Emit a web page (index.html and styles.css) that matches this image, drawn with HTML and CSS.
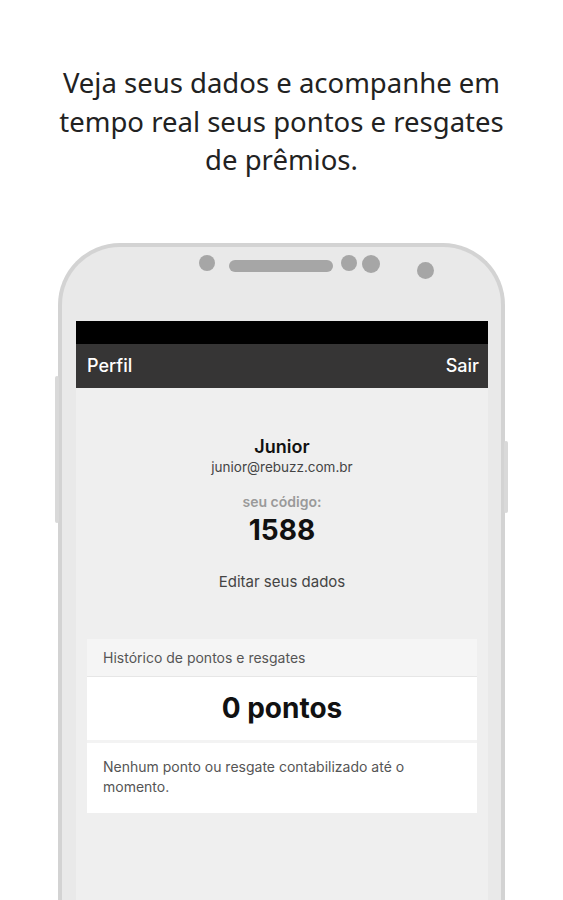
FILE: index.html
```html
<!DOCTYPE html>
<html lang="pt-BR">
<head>
    <meta charset="UTF-8">
    <meta name="viewport" content="width=device-width, initial-scale=1.0">
    <title>Perfil</title>
    <link rel="stylesheet" href="styles.css">
</head>
<body>
    <h1 class="headline">Veja seus dados e acompanhe em<br>tempo real seus pontos e resgates<br>de prêmios.</h1>

    <div class="phone">
        <span class="side-btn left"></span>
        <span class="side-btn right"></span>

        <div class="phone-top">
            <span class="dot"></span>
            <span class="speaker"></span>
            <span class="dot dot-2"></span>
            <span class="dot dot-3"></span>
            <span class="dot dot-4"></span>
        </div>

        <div class="screen">
            <div class="status-bar"></div>
            <div class="app-header">
                <span>Perfil</span>
                <span>Sair</span>
            </div>

            <div class="profile">
                <div class="name">Junior</div>
                <div class="email">junior@rebuzz.com.br</div>
                <div class="code-label">seu código:</div>
                <div class="code">1588</div>
                <div class="edit">Editar seus dados</div>
            </div>

            <div class="card">
                <div class="card-header">Histórico de pontos e resgates</div>
                <div class="card-points">0 pontos</div>
                <div class="card-msg">Nenhum ponto ou resgate contabilizado até o momento.</div>
            </div>
        </div>
    </div>
</body>
</html>
```

FILE: styles.css
```css
html, body {
    height: 900px;
    overflow: hidden;
}

body {
    margin: 0;
    background: #ffffff;
    font-family: Inter, "Liberation Sans", Arial, sans-serif;
    color: #222;
}

.headline {
    margin: 0;
    padding-top: 64px;
    font-family: "Noto Sans", "Open Sans", sans-serif;
    font-weight: 400;
    font-size: 27.5px;
    line-height: 38.5px;
    text-align: center;
    color: #222;
}

.phone {
    position: relative;
    margin: 63px 0 0 58px;
    width: 439px;
    height: 700px;
    border: 4px solid #d3d3d3;
    border-bottom: none;
    border-radius: 62px 62px 0 0;
    background: #e9e9e9;
}

.side-btn {
    position: absolute;
    width: 4px;
    background: #d9d9d9;
    border-radius: 2px;
}

.side-btn.left {
    left: -7px;
    top: 129px;
    height: 147px;
}

.side-btn.right {
    right: -7px;
    top: 194px;
    height: 72px;
}

.phone-top {
    height: 74px;
    display: flex;
    align-items: flex-start;
    padding-left: 137px;
    box-sizing: border-box;
    padding-top: 8px;
}

.dot {
    width: 16px;
    height: 16px;
    border-radius: 50%;
    background: #a6a6a6;
}

.speaker {
    width: 104px;
    height: 12px;
    margin: 5px 0 0 14px;
    border-radius: 6px;
    background: #a6a6a6;
}

.dot-2 {
    margin-left: 8px;
}

.dot-3 {
    width: 18px;
    height: 18px;
    margin: 0 0 0 5px;
}

.dot-4 {
    width: 17px;
    height: 17px;
    margin: 7px 0 0 37px;
}

.screen {
    margin: 0 13px 0 14px;
    height: 700px;
    background: #efefef;
}

.status-bar {
    height: 23px;
    background: #000;
}

.app-header {
    height: 44px;
    background: #363535;
    display: flex;
    justify-content: space-between;
    align-items: center;
    padding: 0 9px 0 11px;
    color: #fff;
    font-size: 18px;
    font-weight: 500;
}

.profile {
    padding-top: 48px;
    text-align: center;
}

.name {
    font-size: 18px;
    font-weight: 600;
    line-height: 22px;
    color: #111;
}

.email {
    font-size: 13.5px;
    line-height: 18px;
    color: #444;
}

.code-label {
    margin-top: 17px;
    font-size: 14px;
    font-weight: 600;
    line-height: 18px;
    color: #9a9a9a;
}

.code {
    margin-top: 2px;
    font-size: 28px;
    font-weight: 700;
    line-height: 34px;
    color: #111;
}

.edit {
    margin-top: 25px;
    font-size: 15px;
    line-height: 20px;
    color: #444;
}

.card {
    margin: 47px 11px 0 11px;
    background: #fff;
}

.card-header {
    height: 37px;
    line-height: 37px;
    padding-left: 16px;
    background: #f5f5f5;
    border-bottom: 1px solid #e6e6e6;
    font-size: 14px;
    color: #555;
}

.card-points {
    height: 66px;
    line-height: 62px;
    text-align: center;
    font-size: 28px;
    font-weight: 700;
    color: #111;
    border-bottom: 3px solid #f3f3f3;
    box-sizing: border-box;
}

.card-msg {
    padding: 14px 16px 16px 16px;
    font-size: 14px;
    line-height: 20px;
    color: #555;
}
```
